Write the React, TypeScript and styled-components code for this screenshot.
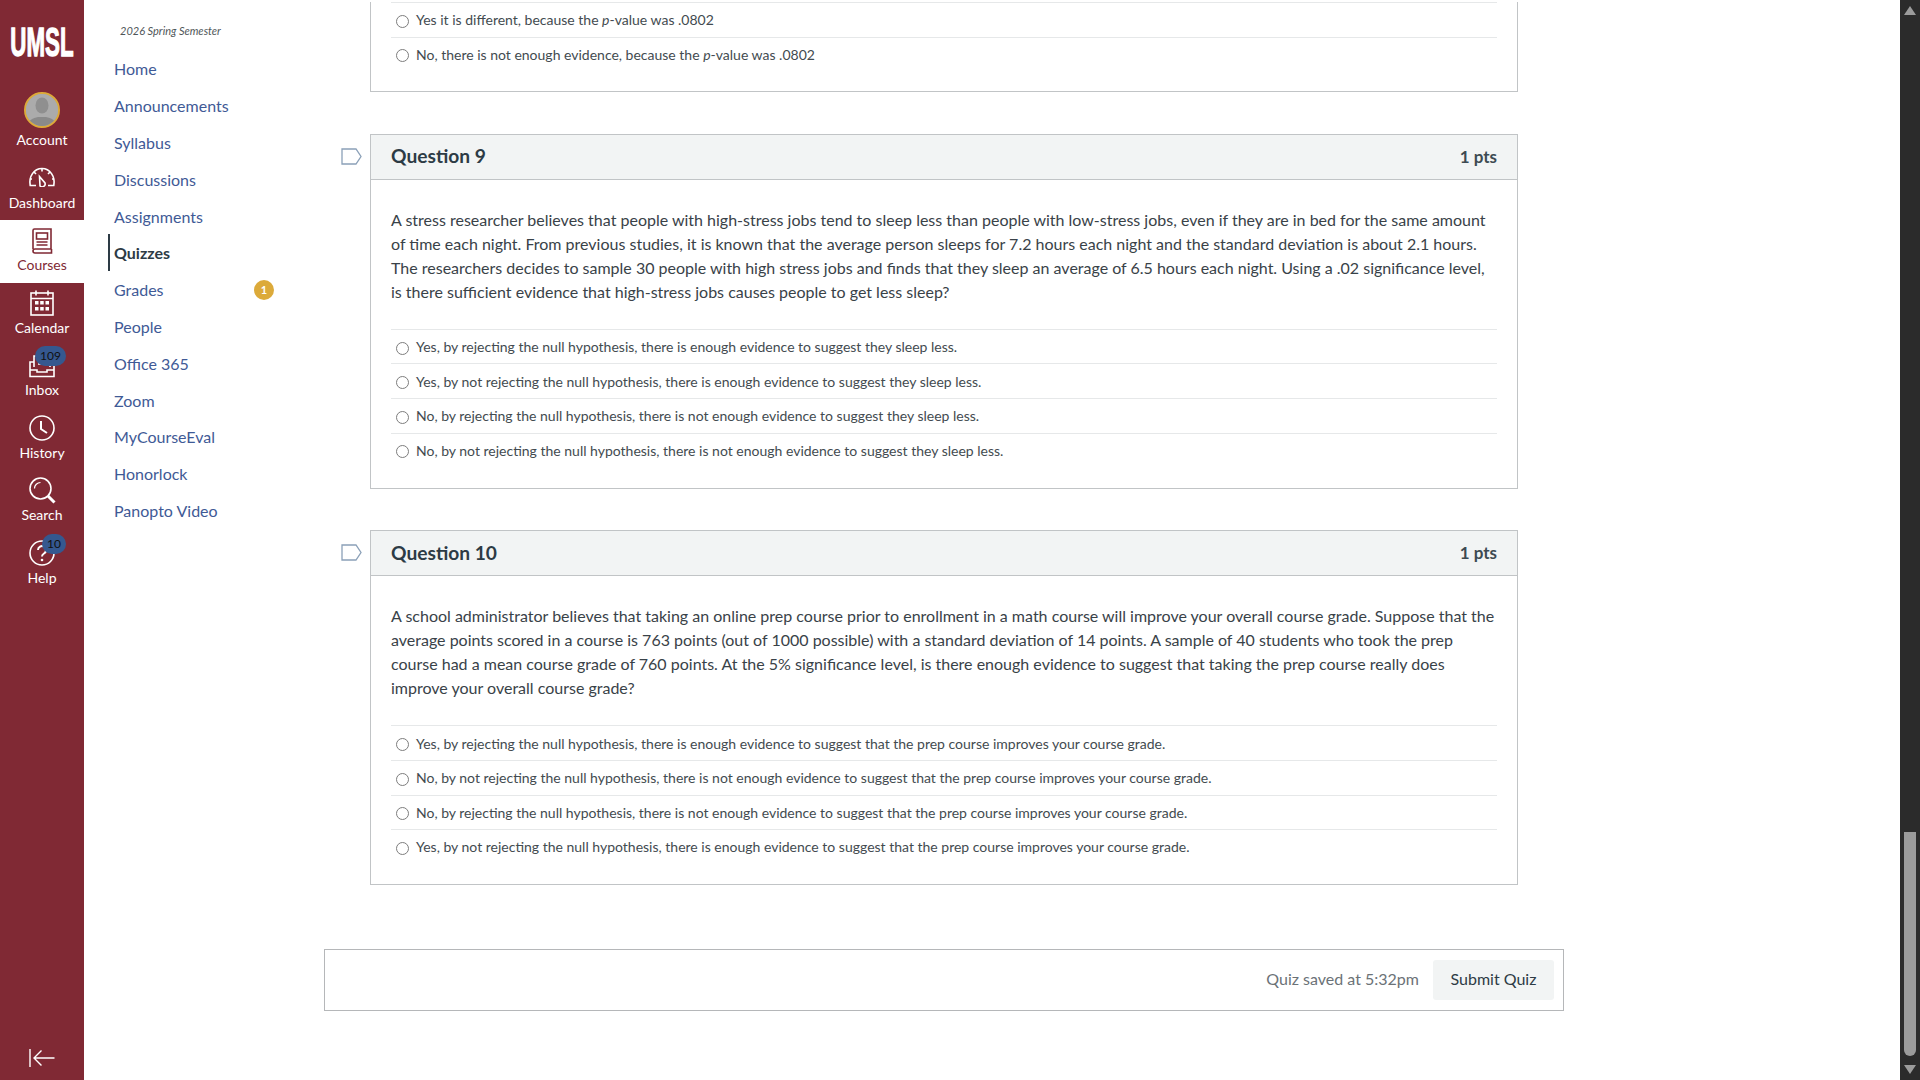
import React from "react";
import styled, { createGlobalStyle } from "styled-components";

const Global = createGlobalStyle`
  html, body { margin: 0; padding: 0; height: 100%; overflow: hidden; background: #fff; }
  body { font-family: Lato, "Open Sans", sans-serif; color: #2d3b45; }
  #root { height: 100%; }
  * { box-sizing: border-box; }
`;

const Page = styled.div`
  display: flex;
  width: 1920px;
  height: 1080px;
  overflow: hidden;
  background: #fff;
`;

const Sidebar = styled.nav`
  flex: 0 0 84px;
  min-width: 0;
  display: flex;
  flex-direction: column;
  background: #802934;
  color: #fff;
`;

const LogoBox = styled.div`
  height: 85px;
  display: flex;
  align-items: center;
  justify-content: center;
  overflow: hidden;
`;

const LogoText = styled.span`
  font-family: "Liberation Sans", Arial, sans-serif;
  font-weight: 700;
  font-size: 31px;
  line-height: 1;
  color: #fff;
  -webkit-text-stroke: 1px #fff;
  display: inline-block;
  transform: scale(0.72, 1.32);
  flex: none;
`;

const GlobalItem = styled.a<{ $active?: boolean; $tall?: boolean }>`
  position: relative;
  height: ${(p) => (p.$tall ? "73px" : "62.4px")};
  padding-top: 7px;
  display: flex;
  flex-direction: column;
  align-items: center;
  background: ${(p) => (p.$active ? "#fff" : "transparent")};
  color: ${(p) => (p.$active ? "#802934" : "#fff")};
`;

const IconBox = styled.div<{ $raised?: boolean }>`
  height: 27px;
  padding-bottom: ${(p) => (p.$raised ? "3px" : "0")};
  display: flex;
  align-items: center;
  justify-content: center;
`;

const ItemLabel = styled.span<{ $low?: boolean }>`
  font-size: 14px;
  line-height: 20px;
  margin-top: ${(p) => (p.$low ? "2px" : "1px")};
`;

const Avatar = styled.div`
  width: 36px;
  height: 36px;
  border-radius: 50%;
  border: 2px solid #dcaa3a;
  background: #a3a3a3;
  overflow: hidden;
  display: flex;
  flex: none;
`;

const CountBadge = styled.span<{ $wide?: boolean }>`
  position: absolute;
  top: ${(p) => (p.$wide ? "1px" : "2px")};
  right: 18px;
  width: ${(p) => (p.$wide ? "31px" : "24px")};
  height: 20px;
  border-radius: 10px;
  background: #35588f;
  color: #111;
  font-size: 12px;
  line-height: 19px;
  text-align: center;
`;

const Collapse = styled.div`
  margin-top: auto;
  height: 32px;
  display: flex;
  justify-content: center;
  align-items: flex-start;
`;

const CourseNav = styled.aside`
  flex: 0 0 240px;
  padding: 23px 0 0 24px;
`;

const Semester = styled.div`
  font-size: 11px;
  line-height: 16px;
  font-style: italic;
  color: #4f5659;
  padding-left: 12px;
  margin-bottom: 11.5px;
`;

const NavList = styled.ul`
  list-style: none;
  margin: 0;
  padding: 0;
`;

const NavItem = styled.li<{ $active?: boolean }>`
  height: 36.8px;
  display: flex;
  align-items: center;
  width: 166px;
  justify-content: space-between;
  padding-left: 4px;
  font-size: 16px;
  color: ${(p) => (p.$active ? "#2d3b45" : "#3f5a96")};
  font-weight: ${(p) => (p.$active ? 700 : 400)};
  border-left: 2px solid ${(p) => (p.$active ? "#2d3b45" : "transparent")};
`;

const GradeBadge = styled.span`
  width: 20px;
  height: 20px;
  border-radius: 50%;
  background: #dcaa3a;
  color: #fff;
  font-size: 11px;
  font-weight: 700;
  line-height: 20px;
  text-align: center;
`;

const Main = styled.main`
  flex: 0 0 1576px;
  min-width: 0;
  display: flex;
  flex-direction: column;
  padding-top: 2px;
`;

const QuestionRow = styled.section`
  display: flex;
  margin-bottom: 41.6px;
`;

const Gutter = styled.div`
  flex: 0 0 46px;
  padding: 14px 0 0 17px;
`;

const Card = styled.div<{ $clipped?: boolean }>`
  width: 1148px;
  border: 1px solid #c1c4c6;
  ${(p) => (p.$clipped ? "border-top: 0;" : "")}
`;

const CardHeader = styled.header`
  height: 45px;
  padding: 0 20px 2px;
  display: flex;
  align-items: center;
  justify-content: space-between;
  background: #f2f4f4;
  border-bottom: 1px solid #c1c4c6;
  color: #2d3b45;
`;

const QuestionTitle = styled.h2`
  margin: 0;
  font-size: 19.2px;
  font-weight: 700;
`;

const Points = styled.span`
  font-size: 17px;
  font-weight: 700;
  color: #3d4a52;
  margin-top: 1px;
`;

const CardBody = styled.div<{ $clipped?: boolean }>`
  padding: ${(p) => (p.$clipped ? "0 20px 20px" : "28px 20px 20.6px")};
`;

const Prose = styled.p`
  margin: 0 0 25px;
  font-size: 16px;
  line-height: 24px;
  color: #394248;
`;

const Answer = styled.label`
  height: 34.6px;
  display: flex;
  align-items: center;
  border-top: 1px solid #e6e8e9;
  font-size: 14px;
  color: #434b50;
`;

const Radio = styled.span`
  flex: 0 0 13px;
  height: 13px;
  margin: 3px 7px 0 5px;
  border-radius: 50%;
  border: 1px solid #7d7d7d;
  background: #fff;
`;

const BottomBar = styled.footer`
  width: 1240px;
  height: 62px;
  margin-top: 22.4px;
  border: 1px solid #b5b7b9;
  padding-right: 9px;
  display: flex;
  align-items: center;
  justify-content: flex-end;
`;

const SavedText = styled.span`
  font-size: 16px;
  color: #6b7277;
  margin: 0 14px 3px 0;
`;

const SubmitButton = styled.button`
  width: 121px;
  height: 40px;
  padding: 0 0 3px;
  border: 0;
  border-radius: 3px;
  background: #f2f4f4;
  color: #2d3b45;
  font-family: Lato, sans-serif;
  font-size: 16px;
`;

const Scrollbar = styled.div`
  flex: 0 0 20px;
  height: 1080px;
  background: #2b2b2b;
  display: flex;
  flex-direction: column;
  align-items: center;
`;

const ArrowUp = styled.div`
  width: 0;
  height: 0;
  margin-top: 6px;
  border-left: 6px solid transparent;
  border-right: 6px solid transparent;
  border-bottom: 9px solid #9b9b9b;
`;

const Thumb = styled.div`
  width: 12px;
  height: 224px;
  margin-top: auto;
  background: #9b9b9b;
  border-radius: 0 0 6px 6px;
`;

const ArrowDown = styled.div`
  width: 0;
  height: 0;
  margin-top: 9px;
  margin-bottom: 6px;
  border-left: 6px solid transparent;
  border-right: 6px solid transparent;
  border-top: 9px solid #9b9b9b;
`;

const S = { fill: "none", stroke: "currentColor", strokeWidth: 1.6 } as const;

const Person = () => (
  <svg width="32" height="32" viewBox="0 0 32 32">
    <rect width="32" height="32" fill="#ababab" />
    <ellipse cx="16" cy="11.5" rx="6.5" ry="8" fill="#8f8f8f" />
    <path d="M1 32c1-6 6-8 11-9h8c5 1 10 3 11 9z" fill="#8a8a8a" />
  </svg>
);
const Gauge = () => (
  <svg width="28" height="20" viewBox="0 0 28 20" {...S}>
    <path d="M8 18.5H2.2C.5 9.5 6 1.5 14 1.5s13.5 8 11.8 17H20" />
    <path d="M14 1.5v3M6 5l2 2M22 5l-2 2M2 12h2M26 12h-2" />
    <path d="M11.5 9.5l5.5 6.5a3 3 0 0 1-5 3z" />
  </svg>
);
const Book = () => (
  <svg width="22" height="26" viewBox="0 0 22 26" {...S}>
    <path d="M2 21V2.5A1.5 1.5 0 0 1 3.5 1H20v20H4a2 2 0 0 0 0 4h16.5v-4" />
    <rect x="5.5" y="5" width="11" height="6" />
    <path d="M5.5 14h11M5.5 17h11" />
  </svg>
);
const CalendarIcon = () => (
  <svg width="24" height="26" viewBox="0 0 24 26" {...S}>
    <rect x="1" y="3" width="22" height="22" />
    <path d="M1 8.5h22M6 .5v5M18 .5v5" />
    <g fill="currentColor" stroke="none">
      <rect x="5" y="11" width="3.5" height="3.5" /><rect x="10.2" y="11" width="3.5" height="3.5" /><rect x="15.5" y="11" width="3.5" height="3.5" />
      <rect x="5" y="17" width="3.5" height="3.5" /><rect x="10.2" y="17" width="3.5" height="3.5" /><rect x="15.5" y="17" width="3.5" height="3.5" />
    </g>
  </svg>
);
const InboxIcon = () => (
  <svg width="26" height="24" viewBox="0 0 26 24" {...S}>
    <path d="M5 13V2h16v11" />
    <path d="M5 8H1v14.5h24V8h-4" />
    <path d="M1 16h7v2h10v-2h7M9 10h8" />
  </svg>
);
const Clock = () => (
  <svg width="26" height="26" viewBox="0 0 26 26" {...S}>
    <circle cx="13" cy="13" r="12" />
    <path d="M12 6v8l6 4" strokeWidth={2} />
  </svg>
);
const SearchIcon = () => (
  <svg width="27" height="27" viewBox="0 0 27 27" {...S}>
    <circle cx="11.5" cy="11.5" r="10.5" />
    <path d="M5.5 11.5a6 6 0 0 1 6-6" strokeWidth={1.2} />
    <path d="M19 19l6.5 6.5" strokeWidth={3} />
  </svg>
);
const HelpIcon = () => (
  <svg width="26" height="26" viewBox="0 0 26 26" {...S}>
    <circle cx="13" cy="13" r="12" />
    <path d="M9 10a4 4 0 1 1 6 3.5c-1.5 1-2 1.5-2 3" strokeWidth={2} />
    <circle cx="13" cy="20" r="1.3" fill="currentColor" stroke="none" />
  </svg>
);
const CollapseIcon = () => (
  <svg width="26" height="20" viewBox="0 0 26 20" fill="none" stroke="#fff" strokeWidth={1.4}>
    <path d="M1 1v18M25.5 10H5M12.5 2.5L5 10l7.5 7.5" />
  </svg>
);
const Tag = () => (
  <svg width="21" height="17" viewBox="0 0 21 17" fill="none" stroke="#8ba0b8" strokeWidth={1.3}>
    <path d="M1 1h14l5 7.5-5 7.5H1z" />
  </svg>
);

const navItems = ["Home", "Announcements", "Syllabus", "Discussions", "Assignments", "Quizzes", "Grades", "People", "Office 365", "Zoom", "MyCourseEval", "Honorlock", "Panopto Video"];

const q9 = [
  "Yes, by rejecting the null hypothesis, there is enough evidence to suggest they sleep less.",
  "Yes, by not rejecting the null hypothesis, there is enough evidence to suggest they sleep less.",
  "No, by rejecting the null hypothesis, there is not enough evidence to suggest they sleep less.",
  "No, by not rejecting the null hypothesis, there is not enough evidence to suggest they sleep less.",
];
const q10 = [
  "Yes, by rejecting the null hypothesis, there is enough evidence to suggest that the prep course improves your course grade.",
  "No, by not rejecting the null hypothesis, there is not enough evidence to suggest that the prep course improves your course grade.",
  "No, by rejecting the null hypothesis, there is not enough evidence to suggest that the prep course improves your course grade.",
  "Yes, by not rejecting the null hypothesis, there is enough evidence to suggest that the prep course improves your course grade.",
];

const Question = ({ n, text, answers }: { n: number; text: string; answers: string[] }) => (
  <QuestionRow>
    <Gutter><Tag /></Gutter>
    <Card>
      <CardHeader>
        <QuestionTitle>Question {n}</QuestionTitle>
        <Points>1 pts</Points>
      </CardHeader>
      <CardBody>
        <Prose>{text}</Prose>
        {answers.map((a) => (
          <Answer key={a}><Radio />{a}</Answer>
        ))}
      </CardBody>
    </Card>
  </QuestionRow>
);

export default function App() {
  return (
    <Page>
      <Global />
      <Sidebar>
        <LogoBox><LogoText>UMSL</LogoText></LogoBox>
        <GlobalItem $tall>
          <Avatar><Person /></Avatar>
          <ItemLabel $low>Account</ItemLabel>
        </GlobalItem>
        <GlobalItem><IconBox $raised><Gauge /></IconBox><ItemLabel>Dashboard</ItemLabel></GlobalItem>
        <GlobalItem $active><IconBox><Book /></IconBox><ItemLabel>Courses</ItemLabel></GlobalItem>
        <GlobalItem><IconBox><CalendarIcon /></IconBox><ItemLabel>Calendar</ItemLabel></GlobalItem>
        <GlobalItem><IconBox><InboxIcon /></IconBox><ItemLabel>Inbox</ItemLabel><CountBadge $wide>109</CountBadge></GlobalItem>
        <GlobalItem><IconBox><Clock /></IconBox><ItemLabel>History</ItemLabel></GlobalItem>
        <GlobalItem><IconBox><SearchIcon /></IconBox><ItemLabel>Search</ItemLabel></GlobalItem>
        <GlobalItem><IconBox><HelpIcon /></IconBox><ItemLabel $low>Help</ItemLabel><CountBadge>10</CountBadge></GlobalItem>
        <Collapse><CollapseIcon /></Collapse>
      </Sidebar>
      <CourseNav>
        <Semester>2026 Spring Semester</Semester>
        <NavList>
          {navItems.map((i) => (
            <NavItem key={i} $active={i === "Quizzes"}>
              {i}
              {i === "Grades" && <GradeBadge>1</GradeBadge>}
            </NavItem>
          ))}
        </NavList>
      </CourseNav>
      <Main>
        <QuestionRow>
          <Gutter />
          <Card $clipped>
            <CardBody $clipped>
              <Answer>
                <Radio />
                <span>Yes it is different, because the <i>p</i>-value was .0802</span>
              </Answer>
              <Answer>
                <Radio />
                <span>No, there is not enough evidence, because the <i>p</i>-value was .0802</span>
              </Answer>
            </CardBody>
          </Card>
        </QuestionRow>
        <Question
          n={9}
          text="A stress researcher believes that people with high-stress jobs tend to sleep less than people with low-stress jobs, even if they are in bed for the same amount of time each night. From previous studies, it is known that the average person sleeps for 7.2 hours each night and the standard deviation is about 2.1 hours. The researchers decides to sample 30 people with high stress jobs and finds that they sleep an average of 6.5 hours each night. Using a .02 significance level, is there sufficient evidence that high-stress jobs causes people to get less sleep?"
          answers={q9}
        />
        <Question
          n={10}
          text="A school administrator believes that taking an online prep course prior to enrollment in a math course will improve your overall course grade. Suppose that the average points scored in a course is 763 points (out of 1000 possible) with a standard deviation of 14 points. A sample of 40 students who took the prep course had a mean course grade of 760 points. At the 5% significance level, is there enough evidence to suggest that taking the prep course really does improve your overall course grade?"
          answers={q10}
        />
        <BottomBar>
          <SavedText>Quiz saved at 5:32pm</SavedText>
          <SubmitButton>Submit Quiz</SubmitButton>
        </BottomBar>
      </Main>
      <Scrollbar>
        <ArrowUp />
        <Thumb />
        <ArrowDown />
      </Scrollbar>
    </Page>
  );
}
